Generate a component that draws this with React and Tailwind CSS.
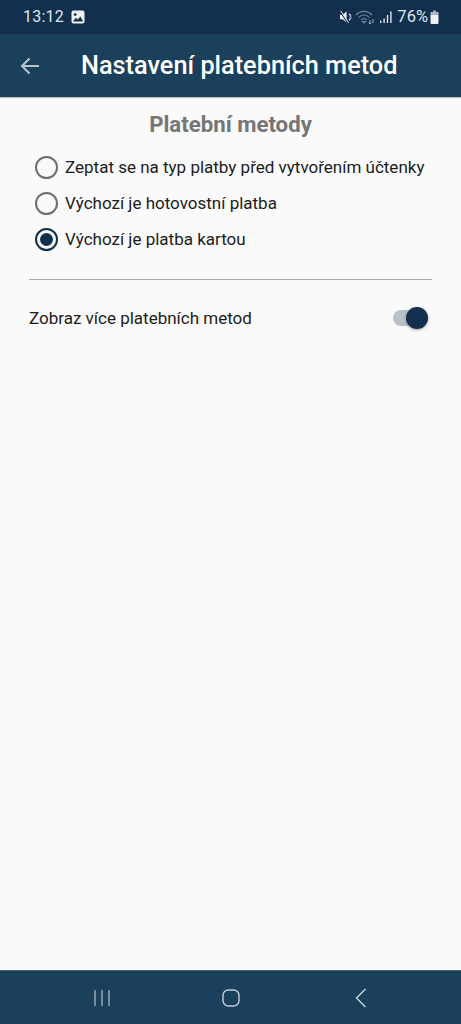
const FONT = "font-['Roboto',sans-serif]";

const OPTIONS = [
  { label: "Zeptat se na typ platby před vytvořením účtenky" },
  { label: "Výchozí je hotovostní platba" },
  { label: "Výchozí je platba kartou", checked: true },
];

function StatusBar() {
  return (
    <div className="h-[34px] bg-[#122f4e] flex items-center justify-between pl-[23px] pr-[22px] text-[#dfe6ec]">
      <div className="flex items-center gap-[7px]">
        <span className="text-[16px] leading-none tracking-[0.2px]">13:12</span>
        <svg width="14" height="14" viewBox="0 0 14 14">
          <rect x="0.5" y="0.5" width="13" height="13" rx="2" fill="#eef2f5" />
          <circle cx="4.2" cy="4.6" r="1.4" fill="#122f4e" />
          <path d="M1.8 11.5 L5 7.8 L6.8 9.6 L9.3 6.4 L12.2 11.5 Z" fill="#122f4e" />
        </svg>
      </div>
      <div className="flex items-center">
        <svg width="14" height="14" viewBox="0 0 14 14" className="mr-[2px]">
          <path d="M1 4.8 H3.6 L7.6 1.6 V12.4 L3.6 9.2 H1 Z" fill="#eef2f5" />
          <path d="M0.6 0.6 L9 13" stroke="#122f4e" strokeWidth="1.4" />
          <path d="M1.6 0.8 L9.6 12.8" stroke="#eef2f5" strokeWidth="1" />
          <path d="M10 4 L12 5.6 M12 8.4 L10 10 M10.5 7 H12.5" stroke="#eef2f5" strokeWidth="1.2" />
        </svg>
        <svg width="20" height="17" viewBox="0 0 20 17" fill="none" stroke="#6f8498" strokeWidth="1.1" className="mr-[4px]">
          <path d="M1 6 C5.5 1.2 12.5 1.2 17 6" />
          <path d="M3.5 8.6 C6.8 5.2 11.2 5.2 14.5 8.6" />
          <path d="M6 11 C8 9.2 10 9.2 12 11" />
          <path d="M9 14 L10.4 12.6 L7.6 12.6 Z" fill="#6f8498" />
          <path d="M15 11 V15 M13.6 13.6 L15 15 L16.4 13.6" stroke="#a9b7c3" strokeWidth="0.9" />
          <path d="M18 10 V14" stroke="#a9b7c3" strokeWidth="0.9" />
        </svg>
        <svg width="14" height="14" viewBox="0 0 14 14" fill="#dfe6ec" className="mr-[4px]">
          <rect x="1" y="10.5" width="1.4" height="2.5" />
          <rect x="4.4" y="8.5" width="1.4" height="4.5" />
          <rect x="7.8" y="5" width="1.4" height="8" />
          <rect x="11.2" y="1.5" width="1.4" height="11.5" />
        </svg>
        <span className="text-[16.5px] leading-none">76%</span>
        <svg width="9" height="15" viewBox="0 0 9 15" className="ml-[2px]">
          <rect x="3" y="0.5" width="3" height="2" fill="#a9b7c3" />
          <rect x="0.5" y="2" width="8" height="3" fill="#a9b7c3" />
          <path d="M0.5 5 H8.5 V13 Q8.5 14 7.5 14 H1.5 Q0.5 14 0.5 13 Z" fill="#eef2f5" />
        </svg>
      </div>
    </div>
  );
}

function Radio({ checked }) {
  return (
    <span className={`w-[23px] h-[23px] rounded-full border-2 flex items-center justify-center shrink-0 ${checked ? "border-[#122f4e]" : "border-[#6f6f6f]"}`}>
      {checked && <span className="w-[13px] h-[13px] rounded-full bg-[#122f4e]" />}
    </span>
  );
}

export default function App() {
  return (
    <div className={`${FONT} w-[461px] h-[1024px] flex flex-col bg-[#fafafa]`}>
      <StatusBar />

      <div className="h-[63px] bg-[#1a405c] flex items-center shadow-[0_1px_1px_rgba(0,0,0,0.25)]">
        <svg width="20" height="18" viewBox="0 0 20 18" fill="none" stroke="#b9c6d0" strokeWidth="2" className="ml-[20px]">
          <path d="M19 9 H2 M9.5 1.5 L2 9 L9.5 16.5" />
        </svg>
        <span className="ml-[41px] text-[25.3px] font-medium text-white leading-none whitespace-nowrap">Nastavení platebních metod</span>
      </div>

      <div className="flex-1 flex flex-col px-[29px]">
        <h1 className="mt-[15px] text-center text-[22.2px] leading-[24px] font-bold text-[#757575]">Platební metody</h1>

        <div className="mt-[20px] pl-[6px] flex flex-col gap-[13px]">
          {OPTIONS.map((o) => (
            <div key={o.label} className="h-[23px] flex items-center gap-[7px]">
              <Radio checked={o.checked} />
              <span className="text-[17px] leading-none text-[#1c1c1c] whitespace-nowrap">{o.label}</span>
            </div>
          ))}
        </div>

        <div className="mt-[28px] h-px bg-[#a8a8a8]" />

        <div className="mt-[26px] h-[24px] flex items-center justify-between">
          <span className="text-[17px] leading-none text-[#1c1c1c]">Zobraz více platebních metod</span>
          <span className="relative w-[34px] h-[16px] mr-[5px] rounded-full bg-[#b9c1c9]">
            <span className="absolute right-[-1px] top-[-3px] w-[22px] h-[22px] rounded-full bg-[#122f4e] shadow-[0_1px_3px_rgba(0,0,0,0.35)]" />
          </span>
        </div>
      </div>

      <div className="h-[54px] bg-[#1a405c] border-t border-[#4a6070] flex items-center text-[#b9c6d0]">
        <svg width="18" height="18" viewBox="0 0 18 18" fill="none" stroke="#a9b8c4" strokeWidth="1.3" className="ml-[93px]">
          <path d="M2 1 V17 M9 1 V17 M16 1 V17" />
        </svg>
        <svg width="18" height="18" viewBox="0 0 18 18" fill="none" stroke="#c3ced7" strokeWidth="1.4" className="ml-[111px]">
          <rect x="1" y="1" width="16" height="16" rx="5.5" />
        </svg>
        <svg width="12" height="20" viewBox="0 0 12 20" fill="none" stroke="#c3ced7" strokeWidth="1.5" className="ml-[115px]">
          <path d="M10.5 1 L1.5 10 L10.5 19" />
        </svg>
      </div>
    </div>
  );
}
